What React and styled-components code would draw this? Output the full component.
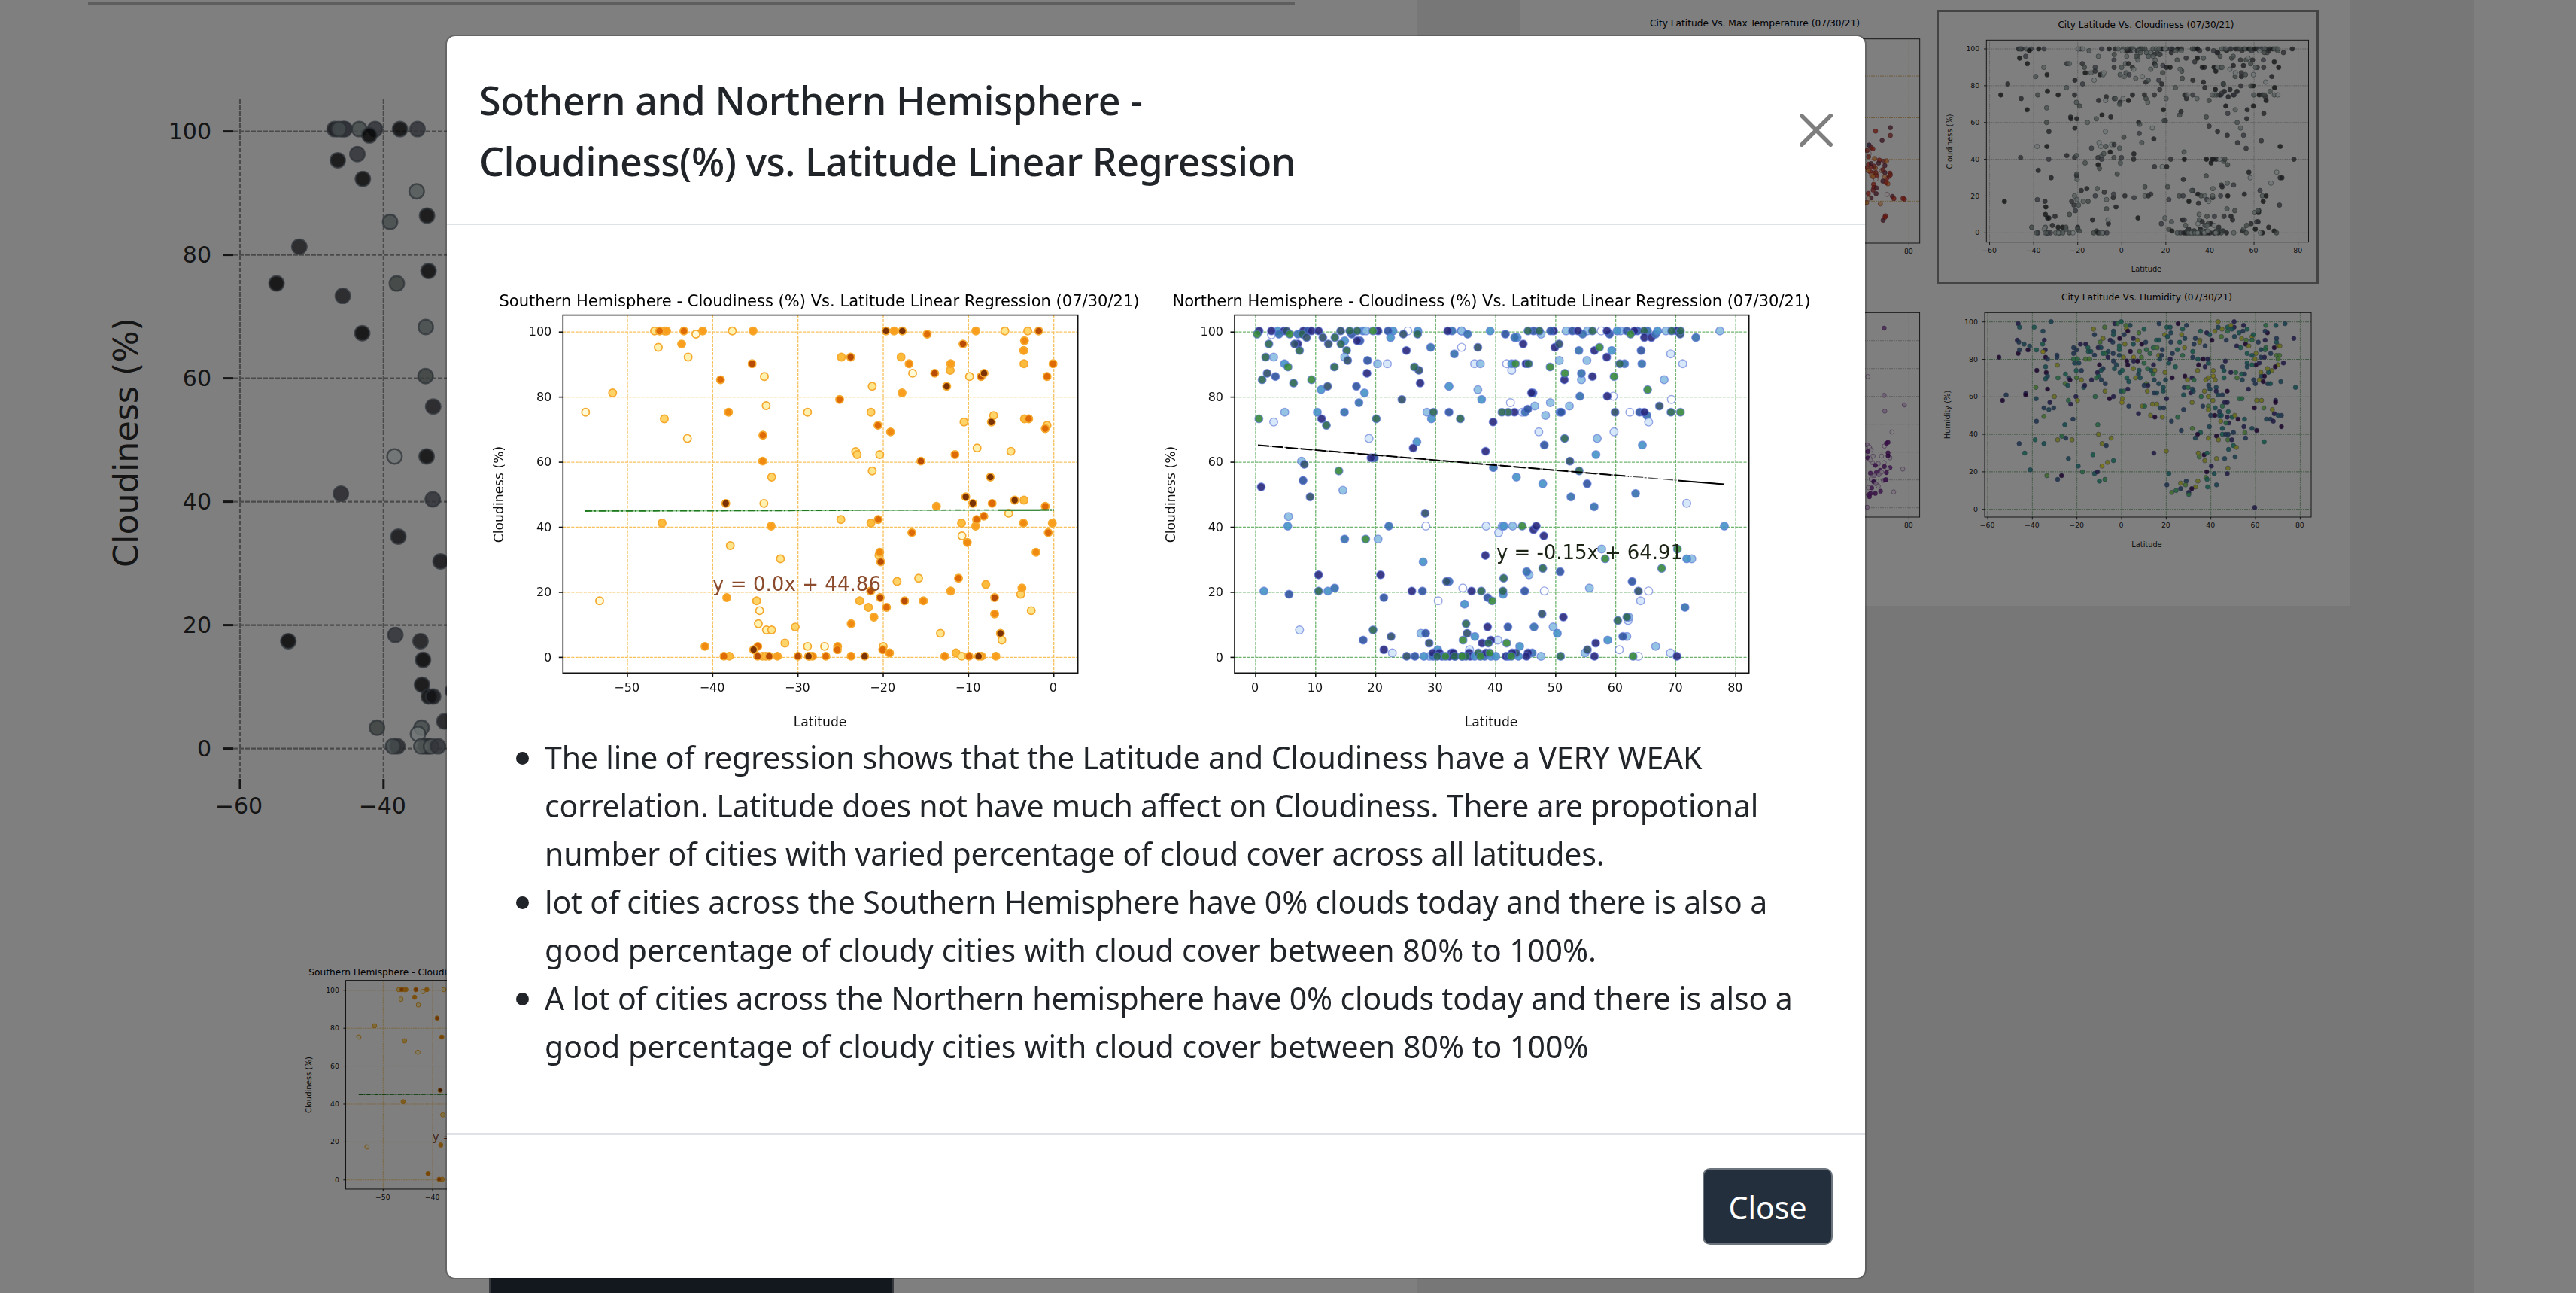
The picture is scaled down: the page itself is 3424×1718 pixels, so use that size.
import React from 'react';
import styled, { createGlobalStyle } from 'styled-components';

/* ---------- data ---------- */

// Each sample is "x y v": plot position and palette index (0-9).
const parse = (text, shift = 0) =>
  text
    .split(';')
    .map((s) => s.trim().split(/\s+/).map(Number))
    .filter((a) => a.length === 3)
    .map(([x, y, v]) => [x + shift, y, v]);

const southRaw = [
  ...parse(
    `690 177 2;730 177 5;738 177 5;710 177 7;807 177 7;882 177 5;855 188 0;1000 177 1;1083 177 5;705 232 1;798 221 5;824 265 1;1079 287 8;1128 330 1;953 341 7;523 385 3;415 450 0;729 472 3;1135 428 1;985 450 6;821 538 0;1122 527 7;1121 614 6;1157 668 3;974 756 9;1126 756 1;720 822 4;1155 832 5;992 898 2;1192 942 2;471 1083 0;978 1072 5;1097 1083 3;1109 1116 0;1104 1160 1;1136 1181 1;1157 1181 2;1251 1171 3;1210 1225 3;891 1236 6;988 1269 4;967 1269 7;1102 1236 7;1085 1247 9;1120 1269 3;1133 1269 4;1101 1269 8;1147 1269 8;1180 1269 5`
  ),
  ...parse(
    `445 177 5;413 177 9;478 177 9;577 188 7;771 177 5;887 177 2;978 177 3;1022 177 8;965 210 6;962 243 5;963 287 4;1079 287 7;1055 330 7;720 221 8;235 265 4;272 265 8;473 265 4;505 287 6;519 319 0;607 319 8;669 309 4;671 287 5;746 330 1;792 330 8;804 319 9;655 363 9;358 363 2;477 385 5;228 407 7;100 450 1;353 450 3;381 494 7;431 516 6;724 483 3;842 461 3;833 483 9;965 472 4;982 472 7;1055 494 3;1048 505 7;292 582 2;298 592 3;388 592 2;358 647 2;552 614 8;688 592 7;776 570 1;911 581 2;829 668 9;731 734 9;759 756 9;836 756 7;926 745 9;963 745 4;614 766 5;1048 766 7;902 789 1;233 810 3;353 822 4;382 810 7;714 822 4;770 832 5;774 810 7;803 799 7;961 822 6;1076 822 5;1060 854 7;516 854 7;716 865 0;737 887 6;385 930 3;388 920 6;392 952 8;1011 920 6;457 1018 3;543 1007 2;702 1007 7;811 1028 4;352 1050 8;390 1072 8;308 1083 4;343 1105 4;415 1105 7;487 1083 8;562 1083 6;671 1050 5;950 1061 3;955 1040 5;992 1116 2;846 1072 8;846 1127 6;365 1138 5;274 1160 6;630 1192 2;875 1215 2;869 1192 9;100 1236 1;168 1236 0;220 1236 6;219 1247 7;402 1236 2;400 1247 7;427 1258 6;62 1269 8;108 1269 5;120 1269 6;104 1269 9;173 1269 7;274 1269 6;328 1269 9;647 1269 6;692 1258 4;715 1269 2;744 1269 7;794 1269 5;782 1269 9;851 1269 5`,
    1200
  ),
];

const northRaw = [
  ...parse(
    `431 177 6;423 188 9;505 177 3;480 190 0;480 177 6;530 177 6;510 188 4;540 177 7;553 188 9;470 221 8;457 265 8;489 265 2;463 319 7;443 341 8;496 330 5;532 287 3;546 298 9;568 352 8;640 341 9;585 188 4;607 177 6;625 177 5;603 188 8;640 177 6;668 177 6;620 199 7;585 221 6;572 221 7;592 243 8;685 199 7;707 221 7;733 199 8;756 177 7;772 210 3;757 221 8;780 243 8;772 265 2;784 276 7;845 177 3;858 177 2;800 188 5;792 177 8;822 177 8;833 210 5;822 210 6;905 177 6;885 177 9;863 276 5;861 319 6;903 287 2;942 287 1;965 177 3;945 177 5;955 199 3;1024 177 0;1006 188 7;1064 177 3;1063 188 8;1018 243 6;1115 232 4;1068 309 7;1050 298 8;1073 352 6;1200 177 4;1183 177 6;1237 177 2;1238 232 0;1209 254 4;1188 363 3;1000 407 7;819 363 5;851 385 3;829 418 4;731 298 8;678 374 3;704 363 7;663 450 3;680 472 6;699 494 8;771 450 4;533 450 2;489 483 1;430 472 9;898 472 8;869 538 1;1100 450 2;1118 472 3;1126 450 8;1188 450 5;1233 472 8;1060 549 3;1045 570 6;890 603 5;877 603 6;600 614 2;611 625 7;606 679 5;749 647 9;439 701 6;634 734 7;765 712 2;548 800 2;545 832 3;772 876 4;856 876 9;905 876 2;948 832 4;1093 789 7;1096 832 0;668 996 6;915 996 6;1085 952 3;450 1050 3;550 1061 5;668 1050 8;705 1050 3;732 1040 4;928 1072 5;1040 1050 6;1082 1050 5;1188 1018 4;1178 1018 7;1243 1040 0;1145 1083 0;1250 1094 3;592 1181 1;885 1181 8;957 1203 7;846 1215 5;928 1247 6;962 1258 1;1076 1192 2;1095 1192 5;1109 1225 7;1143 1247 3;1110 1269 2;1125 1269 4;1088 1269 3;1052 1269 5;1019 1269 7;1124 1258 6;1150 1258 6;1198 1258 6;1160 1269 5;1190 1269 6;1141 1269 8;1174 1269 9;1213 1269 8;1240 1269 9`
  ),
  ...parse(
    `38 177 2;62 188 4;152 177 3;213 188 5;260 199 3;250 199 4;355 188 2;325 177 5;303 177 8;348 177 8;405 177 6;393 177 5;455 177 2;540 177 2;480 177 5;521 188 4;502 177 6;560 177 8;595 177 0;628 188 5;618 177 6;672 177 2;658 177 3;697 177 5;740 177 5;727 177 6;712 188 9;780 177 4;766 177 8;767 199 6;795 199 6;812 188 4;820 177 3;853 177 2;895 177 6;876 177 8;910 188 7;911 177 8;972 199 4;1068 177 2;103 232 7;284 221 6;410 232 6;427 221 7;506 243 4;568 243 6;588 232 9;637 243 3;617 265 6;754 243 5;757 287 4;872 254 1;920 287 1;90 287 1;113 287 2;218 287 0;238 309 1;238 287 3;253 287 9;295 287 6;305 287 8;428 276 2;391 298 9;538 276 2;448 341 6;450 319 9;516 341 2;516 319 4;560 330 6;646 330 9;688 287 4;669 287 8;846 341 2;780 374 9;103 374 2;118 407 3;323 385 5;317 385 6;233 418 0;510 396 4;643 396 0;619 396 6;875 407 0;392 418 2;330 429 2;280 450 1;292 450 4;302 440 5;468 429 2;827 429 7;249 450 6;224 450 8;199 450 8;430 450 3;436 450 5;373 461 2;650 450 7;709 450 0;777 461 4;748 450 5;767 450 6;784 483 1;873 450 8;911 450 9;164 483 6;346 516 1;646 516 1;449 538 8;368 560 5;579 538 2;759 560 3;134 581 6;574 592 3;470 614 7;165 636 4;507 647 8;257 668 3;362 690 3;539 690 5;474 734 4;732 723 4;567 767 4;936 756 1;1086 832 3;136 832 1;186 854 1;200 832 2;207 832 3;242 832 2;280 832 9;325 844 6;336 832 6;366 865 6;133 931 6;597 909 2;611 942 9;899 909 9;956 942 2;936 942 3;836 974 9;362 974 8;307 996 2;298 985 4;431 985 5;206 1007 8;718 1018 5;743 1050 7;784 1050 0;752 1083 1;548 1040 2;368 1050 0;290 1050 5;204 1061 3;203 1050 8;78 1050 6;117 1050 8;142 1072 5;160 1083 9;929 1105 4;359 1127 7;444 1138 6;661 1149 8;702 1149 1;705 1138 2;697 1138 8;327 1171 4;223 1171 5;142 1171 6;403 1171 2;420 1192 3;56 1160 8;60 1192 7;91 1203 3;44 1215 9;183 1215 1;155 1215 6;120 1225 6;145 1225 8;218 1225 9;621 1215 3;573 1225 6;697 1203 2;681 1203 5;270 1236 3;812 1236 2;667 1247 0;530 1258 2;540 1247 7;871 1258 1;897 1269 6;743 1269 0;722 1269 9;568 1269 6;433 1269 8;355 1269 2;320 1258 4;303 1258 6;297 1269 6;265 1269 3;255 1258 7;240 1258 6;215 1269 6;225 1269 5;237 1269 9;70 1247 1;68 1258 6;72 1269 6;5 1258 6;10 1269 8;55 1269 8;40 1269 9;90 1269 3;130 1269 4;155 1269 3;175 1269 3;105 1258 8;135 1258 6;113 1269 9;150 1258 9`,
    1200
  ),
];

const cloud = (y) => (1269 - y) / 10.92;
const south = southRaw.map(([x, y, v]) => [(x - 2282) / 34, cloud(y), v]);
const north = northRaw.map(([x, y, v]) => [(x - 417) / 23.93, cloud(y), v]);
const world = [...south, ...north];

const humidity = parse(
  `612 172 3;511 180 1;515 194 4;560 194 5;587 210 3;508 246 1;513 254 2;529 262 3;546 270 3;511 299 0;515 285 2;541 285 0;567 285 5;586 262 5;591 246 1;594 285 1;587 292 9;452 314 0;595 314 0;601 321 2;630 306 2;630 314 2;631 345 8;568 366 0;595 352 4;597 375 0;601 389 3;595 400 4;565 434 7;601 441 0;474 464 2;463 486 0;534 458 1;534 464 0;566 479 3;622 471 8;608 494 1;590 516 2;605 523 3;620 516 2;590 550 7;567 569 2;514 658 2;563 643 5;590 658 4;531 696 5;548 763 4;599 786 7;632 801 2;644 786 0;632 643 8;645 629 6;657 636 2;654 583 4;665 718 3;676 643 8;679 561 2;695 748 4;708 771 6;672 501 1;665 486 6;688 471 1;693 486 8;633 396 6;656 381 5;655 419 7;666 396 2;670 404 0;663 426 4;689 367 5;690 396 7;705 404 8;712 434 4;705 367 2;681 276 2;681 299 2;681 321 6;702 262 1;718 262 1;725 276 5;726 291 5;690 285 2;693 321 6;697 337 3;684 337 3;718 321 7;730 321 7;742 202 8;745 224 2;776 194 7;807 180 1;815 180 6;827 172 5;854 187 3;841 187 7;843 202 8;803 210 3;803 224 4;771 239 8;762 254 7;793 246 1;801 254 2;822 239 0;836 224 2;847 210 0;756 276 1;765 276 3;745 306 2;734 291 4;771 299 5;780 299 6;787 291 3;802 299 2;786 314 1;821 269 5;821 284 5;838 262 8;855 291 0;821 307 3;834 314 8;803 329 2;812 344 3;844 329 0;847 344 0;865 314 9;864 239 1;881 217 7;897 202 5;877 246 8;864 262 4;890 262 0;902 254 2;883 291 7;889 314 7;865 329 1;877 329 0;864 359 8;806 359 4;823 375 4;830 366 5;760 344 0;771 359 2;765 366 4;754 375 1;757 389 5;736 404 1;751 396 6;766 404 2;778 419 2;715 426 1;777 449 8;747 471 6;791 479 0;803 471 1;826 449 4;834 449 6;847 441 1;844 396 5;850 411 4;831 479 8;829 494 9;850 509 2;871 396 8;880 381 3;885 396 4;882 366 4;897 337 6;908 359 6;919 366 4;930 366 8;925 381 6;926 344 1;904 419 7;897 426 2;909 426 1;907 449 8;928 456 2;936 456 3;928 404 3;942 419 3;961 374 8;963 404 3;956 434 4;956 449 4;966 479 1;892 509 8;899 509 6;923 501 8;936 501 8;946 516 3;957 516 2;880 539 1;917 546 8;930 553 0;953 553 8;943 180 2;967 194 5;977 194 4;979 217 3;960 224 8;969 232 4;935 246 5;943 246 4;979 254 2;953 284 2;925 276 6;937 276 7;904 284 6;915 299 6;942 307 8;951 307 2;945 321 3;977 321 1;984 299 2;973 337 4;993 352 5;999 284 5;1001 180 0;1027 187 2;1015 202 5;1012 224 8;1022 239 3;1006 254 5;1021 276 8;1015 307 6;1046 291 5;1046 314 2;1054 239 2;1050 262 2;1068 246 8;1070 210 5;1089 217 1;1098 224 4;1067 254 8;1084 269 2;1105 246 0;1124 194 3;1124 172 8;1114 210 8;1136 202 8;1153 194 5;1173 172 1;1173 194 1;1163 187 8;1166 202 4;1153 210 6;1134 232 7;1149 246 2;1174 232 3;1188 217 4;1202 187 1;1213 202 5;1200 210 2;1196 239 8;1210 246 7;1208 262 0;1218 269 8;1181 269 1;1193 276 5;1228 232 8;1232 224 5;1228 246 6;1247 254 2;1268 246 1;1275 217 0;1268 210 2;1270 187 6;1301 187 4;1329 180 3;1356 239 1;1303 239 2;1303 254 4;1296 276 0;1308 269 8;1313 269 8;1270 276 6;1268 284 6;1255 284 3;1285 299 2;1240 299 8;1228 307 4;1213 299 5;1255 314 2;1266 314 1;1237 321 8;1303 307 7;1312 307 7;1308 321 7;1324 337 1;1307 344 8;1299 352 0;1288 367 8;1278 374 4;1275 359 8;1240 344 0;1250 337 1;1228 344 5;1213 337 4;1213 352 3;1257 389 3;1266 389 0;1255 374 8;1250 404 8;1262 411 0;1276 419 2;1284 419 4;1316 411 3;1361 434 4;1233 404 2;1238 419 2;1217 441 1;1205 381 2;1196 381 5;1178 374 6;1163 374 1;1182 396 7;1198 404 3;1137 352 2;1142 367 4;1146 329 1;1109 367 8;1109 389 9;1094 396 8;1086 404 8;1115 404 8;1142 396 5;1061 367 8;1064 344 0;1084 352 1;1062 321 4;1078 321 0;1092 321 1;1094 337 4;1022 389 0;983 396 0;1044 396 1;1030 404 8;1050 404 6;1020 434 2;1032 434 6;1045 441 3;1040 456 1;1048 449 3;1018 464 4;1082 449 8;1072 471 6;1094 471 8;1095 426 2;1099 441 3;1118 434 3;1118 449 1;1124 464 3;1137 464 2;1152 449 0;1144 494 1;1152 494 1;1108 486 8;1115 516 4;1128 531 2;1137 509 6;1155 531 5;1094 509 7;1094 523 8;1077 509 2;1018 523 2;1044 494 8;1000 553 6;981 569 2;1011 606 2;1045 598 7;1070 614 5;1061 621 0;1054 636 3;1097 591 3;1094 636 8;1101 546 2;1114 546 0;1128 546 3;1134 546 4;1152 553 1;1157 576 1;1132 569 8;1148 576 6;1167 553 5;1175 546 8;1185 561 0;1205 561 4;1203 591 1;1228 598 3;1242 606 0;1206 614 7;1171 614 2;1137 598 4;1137 621 5;1147 621 2;1155 621 2;1119 628 0;1125 643 8;1154 643 7;1166 643 1;1208 636 2;1171 666 5;1180 673 8;1156 681 4;1265 651 5;1189 479 6;1197 479 6;1242 486 8;1257 486 8;1235 516 0;1264 516 7;1290 523 8;1300 486 1;1300 494 0;1296 539 1;1308 546 3;1318 546 2;1272 561 3;1284 561 2;1293 569 1;1318 591 0;1063 696 8;1066 711 7;1081 703 0;1090 696 5;1083 726 8;1119 718 8;1144 718 3;1176 711 3;1103 748 1;1089 771 0;1112 778 4;1152 778 1;1154 756 8;1087 793 7;1090 801 5;1062 808 8;1055 831 8;1043 838 0;1034 853 1;1034 861 6;1026 808 2;1009 816 8;1024 823 7;1009 838 2;995 845 6;982 853 7;967 823 2;973 778 4;965 688 8;927 696 1;803 726 5;785 733 8;768 748 9;745 778 4;754 771 1;760 808 5;777 801 6;740 703 5;768 658 8;781 666 2;796 636 8;757 621 8;755 583 6;1092 831 5;1119 823 3;1236 913 1`
).map(([x, y, v]) => [(x - 828) / 6.843, (920 - y) / 7.47, v]);

const temperature = parse(
  `96 523 5;155 509 8;155 540 6;122 560 8;70 578 9;78 588 6;85 593 5;70 612 0;62 600 7;68 625 7;92 632 3;111 638 5;108 650 8;128 643 6;140 641 3;133 660 8;68 655 5;62 668 7;80 665 5;78 652 8;95 670 3;90 662 6;75 685 5;66 680 3;88 690 4;80 698 2;100 700 5;97 688 7;120 680 1;133 688 8;125 676 6;153 690 5;150 703 5;155 697 7;140 712 5;132 706 2;125 722 8;145 733 3;138 728 5;97 714 0;86 704 3;88 735 5;89 748 5;99 749 8;98 772 8;86 758 6;67 771 5;78 789 8;68 792 1;60 808 3;142 775 0;163 783 8;169 792 5;205 791 5;211 794 5;115 813 2;135 860 5;133 866 5;126 878 8`
).map(([x, y, v]) => [x / 3 + 392, y / 3 - 16, v]);

const wind = parse(
  `100 198 5;50 391 0;100 466 2;162 504 2;102 529 2;124 612 0;48 663 2;55 672 0;60 683 1;50 690 6;66 708 1;92 708 0;118 715 1;101 668 0;112 653 7;107 657 7;112 695 7;112 707 8;50 715 7;64 734 1;58 724 1;82 738 1;100 734 0;73 745 7;101 750 7;118 754 6;110 760 1;157 760 1;88 765 6;92 772 1;107 774 7;58 776 6;76 774 6;70 785 2;84 782 2;60 800 1;68 810 8;98 805 2;104 803 6;106 802 6;75 818 2;82 828 1;52 834 1;62 835 6;89 848 6;129 851 1;58 857 7;73 857 7;55 870 7;52 862 6;48 912 2`
).map(([x, y, v]) => [x / 2.306 + 392, y / 3 - 11, v]);

const palettes = {
  amber: ['#fffbd8', '#fff2b0', '#fee48a', '#fed469', '#fdbb3c', '#fa9e1e', '#f08a10', '#de6b06', '#b84c04', '#7c3304'],
  ocean: ['#ffffff', '#d2e6fa', '#8abde0', '#4592c6', '#3470ab', '#2d539d', '#27277b', '#2f4f68', '#2a6552', '#36873c'],
  bone: ['#080808', '#111114', '#26262c', '#38383f', '#4c4c56', '#5f6370', '#76827f', '#8a9898', '#a8b6b4', '#e0eaea'],
  viridis: ['#35004c', '#3c2f80', '#355f8d', '#2a788e', '#21908d', '#22a884', '#44bf70', '#7ad151', '#cfd62f', '#f7e620'],
  fire: ['#ffffff', '#ffe3c0', '#ffb06a', '#f58a2e', '#ea5a1c', '#d0301a', '#a83a34', '#b84028', '#6a3040', '#36305a'],
  plum: ['#ffffff', '#f2ecf6', '#d5bce0', '#c09fd0', '#a678bb', '#8a4fa5', '#7a2f96', '#6b1c88', '#4d0a70', '#3f0060'],
};

/* ---------- charts ---------- */

const Plot = styled.svg`
  display: block;
  flex: none;
  width: ${(p) => p.$w}px;
  height: ${(p) => p.$h}px;
  font-family: 'DejaVu Sans', sans-serif;
  overflow: hidden;
`;

const minus = (n) => String(n).replace('-', '\u2212');

function Chart({
  view, size, title, xLabel = 'Latitude', yLabel, box, frame = true, origin, scale, xs, ys, xLine, yLine,
  points, raw, palette, edge, edgeWidth, r, grid, gridDash = '3 2', gridWidth = 1, lift = 0, alpha = 1,
  tickFont, labelFont, tick = 5, ink = '#111', children,
}) {
  const [l, t, rgt, b] = box;
  const X = (v) => origin[0] + v * scale[0];
  const Y = (v) => origin[1] - v * scale[1];
  const colors = palettes[palette];
  return (
    <Plot $w={size[0]} $h={size[1]} viewBox={`0 0 ${view[0]} ${view[1]}`} preserveAspectRatio="none">
      <g stroke={grid} strokeWidth={gridWidth} strokeDasharray={gridDash}>
        {xs.map((v) => <line key={`x${v}`} x1={X(v)} x2={X(v)} y1={t} y2={b} />)}
        {ys.map((v) => <line key={`y${v}`} x1={l} x2={rgt} y1={Y(v)} y2={Y(v)} />)}
      </g>
      <g stroke={edge} strokeWidth={edgeWidth || r / 5} fillOpacity={alpha}>
        {points.map(([x, y, v], i) => (
          <circle key={i} cx={raw ? x : X(x)} cy={(raw ? y : Y(y)) - lift} r={r} fill={colors[v]} />
        ))}
      </g>
      {children}
      <g stroke={ink} strokeWidth={tickFont / 10}>
        {xs.map((v) => <line key={`x${v}`} x1={X(v)} x2={X(v)} y1={b} y2={b + tick} />)}
        {ys.map((v) => <line key={`y${v}`} x1={l - tick} x2={l} y1={Y(v)} y2={Y(v)} />)}
        {frame && <rect x={l} y={t} width={rgt - l} height={b - t} fill="none" />}
      </g>
      <g fontSize={tickFont} fill={ink}>
        {xs.map((v) => (
          <text key={`x${v}`} x={X(v) - tickFont * 0.05} y={b + xLine} textAnchor="middle">{minus(v)}</text>
        ))}
        {yLabel && ys.map((v) => (
          <text key={`y${v}`} x={l - yLine} y={Y(v) + tickFont * 0.33} textAnchor="end">{v}</text>
        ))}
      </g>
      {title && (
        <text x={title.x - title.w / 2} y={title.y} fontSize={title.font} textLength={title.w} lengthAdjust="spacingAndGlyphs" fill="#000">
          {title.text}
        </text>
      )}
      {xLabel && title && title.labelY && (
        <text x={title.labelX} y={title.labelY} fontSize={labelFont} textAnchor="middle" fill={ink}>{xLabel}</text>
      )}
      {yLabel && (
        <text transform={`translate(${yLabel.x} ${yLabel.y}) rotate(-90)`} fontSize={labelFont} textAnchor="middle" fill={ink}>
          {yLabel.text}
        </text>
      )}
    </Plot>
  );
}

function SouthChart({ size }) {
  return (
    <Chart
      view={[893, 633]}
      size={size}
      title={{ text: 'Southern Hemisphere - Cloudiness (%) Vs. Latitude Linear Regression (07/30/21)', x: 452, y: 65, w: 851, font: 21, labelX: 453, labelY: 623 }}
      yLabel={{ text: 'Cloudiness (%)', x: 32, y: 315 }}
      box={[111.3, 76.6, 795.7, 552.3]}
      origin={[763.7, 531.4]}
      scale={[11.334, 4.322]}
      xs={[-50, -40, -30, -20, -10, 0]}
      ys={[0, 20, 40, 60, 80, 100]}
      xLine={24.5}
      yLine={15}
      points={south}
      palette="amber"
      edge="#f5a92e"
      edgeWidth={1.7}
      r={5.1}
      lift={1.5}
      grid="#f7c15c"
      gridWidth={1.3}
      gridDash="4 1.5"
      tickFont={16}
      labelFont={17.2}
      tick={5.5}
    >
      <line x1="141" x2="764" y1="336.9" y2="335.6" stroke="#8cc48c" strokeWidth="1.6" />
      <line x1="141" x2="500" y1="336.9" y2="335.9" stroke="#1f7a1f" strokeWidth="2" strokeDasharray="9 3 2 4" />
      <line x1="500" x2="690" y1="335.9" y2="335.7" stroke="#5b9c5b" strokeWidth="1.8" strokeDasharray="7 3 3 6" />
      <line x1="690" x2="764" y1="335.7" y2="335.6" stroke="#14701a" strokeWidth="2" strokeDasharray="3 1" />
      <text x="310" y="442.5" fontSize="26" fill="#8b4a2b" textLength="224">y = 0.0x + 44.86</text>
    </Chart>
  );
}

function NorthChart({ size }) {
  return (
    <Chart
      view={[893, 633]}
      size={size}
      title={{ text: 'Northern Hemisphere - Cloudiness (%) Vs. Latitude Linear Regression (07/30/21)', x: 452.5, y: 65, w: 848, font: 21, labelX: 452, labelY: 623 }}
      yLabel={{ text: 'Cloudiness (%)', x: 31.5, y: 315 }}
      box={[111, 76.6, 794.7, 552.3]}
      origin={[139, 531.4]}
      scale={[7.977, 4.322]}
      xs={[0, 10, 20, 30, 40, 50, 60, 70, 80]}
      ys={[0, 20, 40, 60, 80, 100]}
      xLine={24.5}
      yLine={15}
      points={north}
      palette="ocean"
      edge="rgba(90,115,215,.62)"
      edgeWidth={1.4}
      alpha={0.9}
      r={5.3}
      lift={1.5}
      grid="#6fb56f"
      gridWidth={1.3}
      gridDash="4 1.5"
      tickFont={16}
      labelFont={17.2}
      tick={5.5}
    >
      <line x1="142" y1="249.5" x2="762" y2="301.5" stroke="#555" strokeWidth="1.2" strokeDasharray="14 1.5 3 1.5" />
      <line x1="142" y1="249.5" x2="635" y2="291" stroke="#000" strokeWidth="2" strokeDasharray="15 4" />
      <line x1="700" y1="296.5" x2="762" y2="301.5" stroke="#000" strokeWidth="2" />
      <text x="459" y="401" fontSize="26" fill="#1c2416" textLength="248">y = -0.15x + 64.91</text>
    </Chart>
  );
}

const latTicks = [-60, -40, -20, 0, 20, 40, 60, 80];
const pctTicks = [0, 20, 40, 60, 80, 100];

function CloudinessLarge() {
  return (
    <Chart
      view={[1883, 1252]}
      size={[1883, 1252]}
      yLabel={{ text: 'Cloudiness (%)', x: 183, y: 582 }}
      box={[310, 126, 1700, 1029]}
      frame={false}
      origin={[891.4, 988.6]}
      scale={[9.54, 8.2]}
      xs={[-60, -40]}
      ys={pctTicks}
      xLine={45.5}
      yLine={29}
      points={world}
      palette="bone"
      edge="rgba(85,95,105,.7)"
      edgeWidth={2.4}
      alpha={0.82}
      r={9.8}
      lift={3}
      grid="#949494"
      gridDash="6 2"
      gridWidth={2.2}
      tickFont={30}
      labelFont={44.4}
      tick={13}
      ink="#2a2a2a"
    />
  );
}

function CloudinessThumb() {
  return (
    <Chart
      view={[502, 359]}
      size={[502, 359]}
      title={{ text: 'City Latitude Vs. Cloudiness (07/30/21)', x: 275.5, y: 20.6, w: 234, font: 12, labelX: 276, labelY: 345.4 }}
      yLabel={{ text: 'Cloudiness (%)', x: 17.5, y: 172 }}
      box={[63.3, 37.3, 491.5, 305.7]}
      origin={[243.3, 293.3]}
      scale={[2.929, 2.443]}
      xs={latTicks}
      ys={pctTicks}
      xLine={14}
      yLine={9}
      points={world}
      palette="bone"
      edge="rgba(75,88,88,.85)"
      alpha={0.72}
      r={3.1}
      grid="#c0c0c0"
      gridDash="2 1"
      tickFont={9.4}
      labelFont={9.8}
      tick={3.3}
      ink="#222"
    />
  );
}

function HumidityThumb() {
  return (
    <Chart
      view={[502, 359]}
      size={[502, 359]}
      title={{ text: 'City Latitude Vs. Humidity (07/30/21)', x: 276.5, y: 18, w: 227, font: 12, labelX: 276.5, labelY: 346.4 }}
      yLabel={{ text: 'Humidity (%)', x: 15, y: 170 }}
      box={[61, 34.3, 495, 306]}
      origin={[243, 295.7]}
      scale={[2.967, 2.49]}
      xs={latTicks}
      ys={pctTicks}
      xLine={14}
      yLine={9}
      points={humidity}
      palette="viridis"
      edge="rgba(80,90,150,.75)"
      alpha={0.85}
      r={3}
      grid="#86b48c"
      gridDash="2 1"
      tickFont={9.4}
      labelFont={9.8}
      tick={3.3}
      ink="#222"
    />
  );
}

function TemperatureThumb() {
  return (
    <Chart
      view={[502, 359]}
      size={[502, 359]}
      title={{ text: 'City Latitude Vs. Max Temperature (07/30/21)', x: 263.5, y: 18.8, w: 279, font: 12 }}
      box={[52, 35.7, 482.7, 307]}
      origin={[234, 251.3]}
      scale={[2.929, 2.77]}
      xs={[80]}
      ys={[0, 20, 40, 60]}
      xLine={14}
      yLine={9}
      points={temperature}
      raw
      palette="fire"
      edge="rgba(120,35,55,.75)"
      alpha={0.78}
      r={3}
      grid="#e0b878"
      gridDash="2 1"
      tickFont={9.4}
      labelFont={9.8}
      tick={3.3}
      ink="#222"
    />
  );
}

function WindThumb() {
  return (
    <Chart
      view={[502, 359]}
      size={[502, 359]}
      box={[52, 34.3, 482.6, 306]}
      origin={[234, 293.7]}
      scale={[2.929, 7.4]}
      xs={[80]}
      ys={[0, 5, 10, 15, 20, 25, 30]}
      xLine={14}
      yLine={9}
      points={wind}
      raw
      palette="plum"
      edge="rgba(105,40,130,.8)"
      alpha={0.85}
      r={2.9}
      grid="#c0c0c0"
      gridDash="2 1"
      tickFont={9.4}
      labelFont={9.8}
      tick={3.3}
      ink="#222"
    />
  );
}

/* ---------- page ---------- */

const Global = createGlobalStyle`
  * { box-sizing: border-box; }
  body {
    margin: 0;
    background: #fff;
    color: #212529;
    font-family: 'Noto Sans', 'Open Sans', sans-serif;
    overflow: hidden;
  }
`;

const Page = styled.div`
  display: flex;
  width: 3424px;
  height: 1718px;
  overflow: hidden;
`;

const Article = styled.main`
  display: flex;
  flex-direction: column;
  flex: none;
  width: 1883px;
`;

const Rule = styled.hr`
  flex: none;
  width: 1604px;
  height: 3px;
  margin: 3px 0 0 117px;
  border: 0;
  background: #bcbcbc;
`;

const ThumbRow = styled.div`
  display: flex;
  flex: none;
  padding-left: 395px;
`;

const Launch = styled.button`
  flex: none;
  width: 538px;
  height: 102px;
  margin: 0 0 0 650px;
  border: 2px solid #6c757d;
  border-radius: 11px;
  background: #24303c;
`;

const Sidebar = styled.aside`
  flex: none;
  width: 1406px;
  padding-left: 138px;
  background: #eee;
`;

const Gallery = styled.div`
  display: grid;
  grid-template-columns: 508px 508px;
  grid-auto-rows: 365px;
  width: 1103px;
  height: 805px;
  padding: 13px 0 0 45px;
  background: #fff;
`;

const Card = styled.a`
  display: flex;
  border: 3px solid ${(p) => (p.$active ? '#888' : 'transparent')};
`;

/* ---------- modal ---------- */

const Backdrop = styled.div`
  position: fixed;
  inset: 0;
  padding: 46px 0 0 592px;
  background: rgba(0, 0, 0, 0.5);
`;

const Dialog = styled.section`
  display: flex;
  flex-direction: column;
  width: 1889px;
  height: 1654px;
  border: 2px solid rgba(0, 0, 0, 0.2);
  border-radius: 13px;
  background: #fff;
  background-clip: padding-box;
`;

const Header = styled.header`
  display: flex;
  align-items: center;
  justify-content: space-between;
  height: 251px;
  padding: 0 43px;
  border-bottom: 2px solid #dee2e6;
`;

const Title = styled.h5`
  margin: 0;
  font-size: 52px;
  font-weight: 500;
  line-height: 81px;
  letter-spacing: -0.46px;
  white-space: nowrap;
`;

const CloseIcon = styled.button`
  display: flex;
  padding: 0;
  border: 0;
  background: none;
  opacity: 0.5;

  svg {
    width: 44px;
    height: 44px;
  }
`;

const Body = styled.div`
  flex: 1;
  padding: 43px 43px 0;
`;

const Figures = styled.div`
  display: flex;
  width: 1800px;
  height: 632px;
`;

const Notes = styled.ul`
  margin: 0;
  padding: 0 0 0 87px;
  list-style: none;
  font-size: 41px;
  line-height: 64px;
`;

const Note = styled.li`
  position: relative;

  &::before {
    content: '';
    position: absolute;
    left: -38px;
    top: 25px;
    width: 17px;
    height: 17px;
    border-radius: 50%;
    background: #212529;
  }
`;

const Line = styled.div`
  white-space: nowrap;
  letter-spacing: ${(p) => p.$track}px;
`;

const Footer = styled.footer`
  display: flex;
  align-items: center;
  justify-content: flex-end;
  height: 192px;
  padding: 0 43px;
  border-top: 2px solid #dee2e6;
`;

const CloseButton = styled.button`
  width: 173px;
  height: 102px;
  padding: 1px 0 0;
  border: 2px solid #6c757d;
  border-radius: 10px;
  background: #242f3d;
  color: #fff;
  font-family: inherit;
  font-size: 41px;
  line-height: 64px;
`;

const notes = [
  [
    ['The line of regression shows that the Latitude and Cloudiness have a VERY WEAK', -0.15],
    ['correlation. Latitude does not have much affect on Cloudiness. There are propotional', -0.24],
    ['number of cities with varied percentage of cloud cover across all latitudes.', -0.21],
  ],
  [
    ['lot of cities across the Southern Hemisphere have 0% clouds today and there is also a', -0.15],
    ['good percentage of cloudy cities with cloud cover between 80% to 100%.', 0.03],
  ],
  [
    ['A lot of cities across the Northern hemisphere have 0% clouds today and there is also a', -0.13],
    ['good percentage of cloudy cities with cloud cover between 80% to 100%', 0.04],
  ],
];

export default function App() {
  return (
    <>
      <Global />
      <Page>
        <Article>
          <Rule />
          <CloudinessLarge />
          <ThumbRow>
            <SouthChart size={[518, 369]} />
          </ThumbRow>
          <Launch />
        </Article>
        <Sidebar>
          <Gallery>
            <Card><TemperatureThumb /></Card>
            <Card $active><CloudinessThumb /></Card>
            <Card><WindThumb /></Card>
            <Card><HumidityThumb /></Card>
          </Gallery>
        </Sidebar>
      </Page>
      <Backdrop>
        <Dialog role="dialog">
          <Header>
            <Title>
              Sothern and Northern Hemisphere -<br />
              Cloudiness(%) vs. Latitude Linear Regression
            </Title>
            <CloseIcon aria-label="Close">
              <svg viewBox="0 0 16 16" fill="#000">
                <path d="M.293.293a1 1 0 011.414 0L8 6.586 14.293.293a1 1 0 111.414 1.414L9.414 8l6.293 6.293a1 1 0 01-1.414 1.414L8 9.414l-6.293 6.293a1 1 0 01-1.414-1.414L6.586 8 .293 1.707a1 1 0 010-1.414z" />
              </svg>
            </CloseIcon>
          </Header>
          <Body>
            <Figures>
              <SouthChart size={[893, 633]} />
              <NorthChart size={[893, 633]} />
            </Figures>
            <Notes>
              {notes.map((lines, i) => (
                <Note key={i}>
                  {lines.map(([text, track]) => (
                    <Line key={text} $track={track}>{text}</Line>
                  ))}
                </Note>
              ))}
            </Notes>
          </Body>
          <Footer>
            <CloseButton>Close</CloseButton>
          </Footer>
        </Dialog>
      </Backdrop>
    </>
  );
}
